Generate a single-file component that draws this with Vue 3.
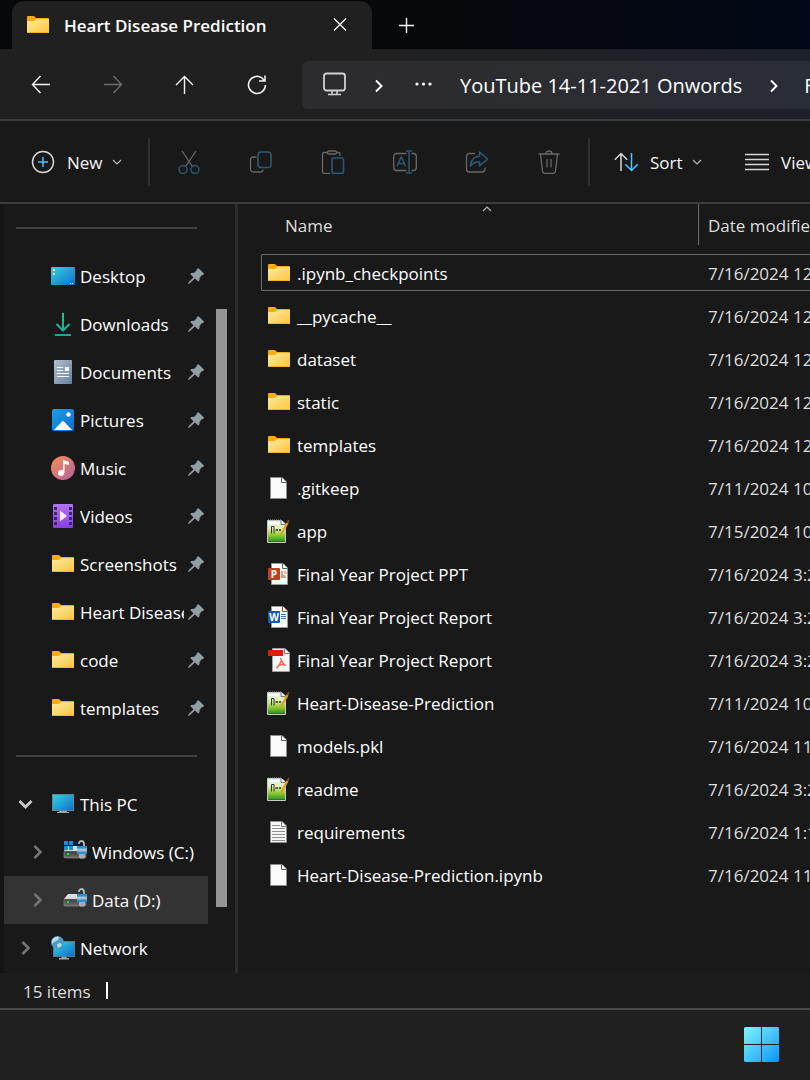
<script setup>
import { ref } from 'vue'

const quickAccess = [
  { name: 'Desktop', icon: 'desktop' },
  { name: 'Downloads', icon: 'downloads' },
  { name: 'Documents', icon: 'documents' },
  { name: 'Pictures', icon: 'pictures' },
  { name: 'Music', icon: 'music' },
  { name: 'Videos', icon: 'videos' },
  { name: 'Screenshots', icon: 'folder' },
  { name: 'Heart Disease Prediction', icon: 'folder' },
  { name: 'code', icon: 'folder' },
  { name: 'templates', icon: 'folder' },
]

const devices = [
  { name: 'This PC', icon: 'pc', open: true },
  { name: 'Windows (C:)', icon: 'drive-c', child: true },
  { name: 'Data (D:)', icon: 'drive-d', child: true, current: true },
  { name: 'Network', icon: 'network' },
]

const actions = [
  { name: 'Cut', icon: 'cut' },
  { name: 'Copy', icon: 'copy' },
  { name: 'Paste', icon: 'paste' },
  { name: 'Rename', icon: 'rename' },
  { name: 'Share', icon: 'share' },
  { name: 'Delete', icon: 'trash' },
]

const files = [
  { name: '.ipynb_checkpoints', icon: 'folder', date: '7/16/2024 12:30 PM' },
  { name: '__pycache__', icon: 'folder', date: '7/16/2024 12:30 PM' },
  { name: 'dataset', icon: 'folder', date: '7/16/2024 12:30 PM' },
  { name: 'static', icon: 'folder', date: '7/16/2024 12:30 PM' },
  { name: 'templates', icon: 'folder', date: '7/16/2024 12:30 PM' },
  { name: '.gitkeep', icon: 'file', date: '7/11/2024 10:15 AM' },
  { name: 'app', icon: 'notepad', date: '7/15/2024 10:40 AM' },
  { name: 'Final Year Project PPT', icon: 'ppt', date: '7/16/2024 3:20 PM' },
  { name: 'Final Year Project Report', icon: 'word', date: '7/16/2024 3:20 PM' },
  { name: 'Final Year Project Report', icon: 'pdf', date: '7/16/2024 3:20 PM' },
  { name: 'Heart-Disease-Prediction', icon: 'notepad', date: '7/11/2024 10:15 AM' },
  { name: 'models.pkl', icon: 'file', date: '7/16/2024 11:50 AM' },
  { name: 'readme', icon: 'notepad', date: '7/16/2024 3:20 PM' },
  { name: 'requirements', icon: 'textfile', date: '7/16/2024 1:10 PM' },
  { name: 'Heart-Disease-Prediction.ipynb', icon: 'file', date: '7/16/2024 11:50 AM' },
]

const focused = ref(0)
</script>

<template>
  <!-- icon sprite -->
  <svg class="sprite" aria-hidden="true">
    <defs>
      <linearGradient id="g-folder" x1="0" y1="0" x2="1" y2="1">
        <stop offset="0" stop-color="#ffe9a0" /><stop offset="1" stop-color="#fcc73c" />
      </linearGradient>
      <linearGradient id="g-screen" x1="0" y1="0" x2="1" y2="1">
        <stop offset="0" stop-color="#35d3e2" /><stop offset="1" stop-color="#0f6fca" />
      </linearGradient>
      <linearGradient id="g-down" x1="0" y1="0" x2="0" y2="24" gradientUnits="userSpaceOnUse">
        <stop offset="0" stop-color="#2fc583" /><stop offset="1" stop-color="#14a89f" />
      </linearGradient>
      <linearGradient id="g-doc" x1="0" y1="0" x2="1" y2="1">
        <stop offset="0" stop-color="#b0bfd2" /><stop offset="1" stop-color="#67829f" />
      </linearGradient>
      <linearGradient id="g-pic" x1="0" y1="0" x2="1" y2="1">
        <stop offset="0" stop-color="#1d9de6" /><stop offset="1" stop-color="#0c6fd0" />
      </linearGradient>
      <linearGradient id="g-music" x1="0" y1="0" x2="1" y2="1">
        <stop offset="0.1" stop-color="#f08b5c" /><stop offset="1" stop-color="#b160a0" />
      </linearGradient>
      <linearGradient id="g-video" x1="0" y1="0" x2="0" y2="1">
        <stop offset="0" stop-color="#b473f0" /><stop offset="1" stop-color="#8840dd" />
      </linearGradient>
      <linearGradient id="g-note" x1="0" y1="0" x2="0" y2="1">
        <stop offset="0" stop-color="#e4f3f7" /><stop offset="0.35" stop-color="#e2f0b4" />
        <stop offset="0.65" stop-color="#97cc35" /><stop offset="1" stop-color="#218b22" />
      </linearGradient>
      <linearGradient id="g-drive" x1="0" y1="0" x2="0" y2="1">
        <stop offset="0" stop-color="#3a3a3a" /><stop offset="1" stop-color="#6e6e6e" />
      </linearGradient>
      <linearGradient id="g-win" x1="0" y1="0" x2="35" y2="35" gradientUnits="userSpaceOnUse">
        <stop offset="0.1" stop-color="#74ecff" /><stop offset="1" stop-color="#0b95fb" />
      </linearGradient>
    </defs>

    <symbol id="i-folder" viewBox="0 0 24 24">
      <path d="M1 4Q1 3 2 3H8L10 5H22Q23 5 23 6V19H1Z" fill="#f9ac0e" />
      <path d="M1 8H8L10 6H23V19Q23 20 22 20H2Q1 20 1 19Z" fill="url(#g-folder)" />
      <path d="M1 19.500H23" stroke="#f0b429" />
    </symbol>
    <symbol id="i-desktop" viewBox="0 0 24 24">
      <rect y="3" width="24" height="18" rx="1" fill="url(#g-screen)" />
      <path d="M2 5h2v2H2zM2 9h2v2H2zM19 19h1v1h-1zM21 19h1v1h-1z" fill="#fff" />
    </symbol>
    <symbol id="i-downloads" viewBox="0 0 24 24">
      <path d="M12 1V18M5.500 12L12 18.500L18.500 12M4 23H20" fill="none" stroke="url(#g-down)" stroke-width="2" />
    </symbol>
    <symbol id="i-documents" viewBox="0 0 24 24">
      <rect x="3" width="18" height="24" rx="1" fill="url(#g-doc)" />
      <path d="M6 7.500h6M6 10.500h6M6 13.500h12M6 16.500h12" stroke="#fff" />
      <rect x="14" y="7" width="4" height="4" fill="#fff" />
    </symbol>
    <symbol id="i-pictures" viewBox="0 0 24 24">
      <rect x="1" y="1" width="22" height="22" rx="2" fill="url(#g-pic)" />
      <path d="M3 22L11 13.500Q12 12.500 13 13.500L21 22Z" fill="#f7fbff" />
      <circle cx="17.500" cy="6.500" r="2.200" fill="#fff" />
    </symbol>
    <symbol id="i-music" viewBox="0 0 24 24">
      <circle cx="12" cy="12" r="12" fill="url(#g-music)" />
      <circle cx="10" cy="17" r="3" fill="#fff" />
      <path d="M12 17V4L18 6V9L13.500 8V17Z" fill="#fff" />
    </symbol>
    <symbol id="i-videos" viewBox="0 0 24 24">
      <rect x="2" width="20" height="24" rx="1" fill="url(#g-video)" />
      <path d="M3 3h3v3H3zM3 8h3v3H3zM3 13h3v3H3zM3 18h3v3H3zM18 3h3v3h-3zM18 8h3v3h-3zM18 13h3v3h-3zM18 18h3v3h-3z" fill="#3c2370" />
      <path d="M9 6.500L16 12L9 17.500Z" fill="#f3ecff" />
    </symbol>
    <symbol id="i-pc" viewBox="0 0 24 24">
      <path d="M9 18h6l1 2h2v1H6v-1h2z" fill="#9aa7ad" />
      <rect x="1" y="2" width="22" height="17" fill="#5d8792" />
      <rect x="2" y="3" width="20" height="15" fill="url(#g-screen)" />
    </symbol>
    <symbol id="i-lock" viewBox="0 0 24 24">
      <path d="M16 4V3Q16.500 1 18.500 1T21 3.500V7" fill="none" stroke="#aeb8bf" stroke-width="1.800" />
      <rect x="14" y="6" width="10" height="8" fill="#2590dc" />
      <path d="M14 8.500H24V11.500H14Z" fill="#a9bfd0" />
      <path d="M16 14H22V17L21 18.500H17L16 17Z" fill="#a7adb3" />
    </symbol>
    <symbol id="i-drive-c" viewBox="0 0 24 24">
      <path d="M4 6H20L23 11H1Z" fill="#dcdcdc" />
      <rect x="1" y="11" width="22" height="7" rx="1" fill="url(#g-drive)" stroke="#a8a8a8" stroke-width="0.500" />
      <rect x="4" y="13" width="2" height="2" fill="#2fe02f" />
      <path d="M1 1h4v4H1zM6 1h4v4H6zM1 6h4v4H1zM6 6h4v4H6z" fill="#128ede" />
      <use href="#i-lock" />
    </symbol>
    <symbol id="i-drive-d" viewBox="0 0 24 24">
      <path d="M5 6H19L23 11H1Z" fill="#dcdcdc" />
      <rect x="1" y="11" width="22" height="7" rx="1" fill="url(#g-drive)" stroke="#a8a8a8" stroke-width="0.500" />
      <rect x="4" y="13" width="2" height="2" fill="#2fe02f" />
      <use href="#i-lock" />
    </symbol>
    <symbol id="i-network" viewBox="0 0 24 24">
      <path d="M11 21h4l1 1h2v1.500H8V22h2z" fill="#9aa7ad" />
      <rect x="2" y="5" width="22" height="16" fill="#557f8c" />
      <rect x="3" y="6" width="20" height="14" fill="url(#g-screen)" />
      <circle cx="6.500" cy="6.500" r="6.500" fill="#4c9cc6" />
      <path d="M2 2.500Q5 0 8 1L7 4L3 6L1 8Q0 5 2 2.500ZM6 8L9 7L11 9Q9 12 7 12Z" fill="#b8dced" />
    </symbol>

    <symbol id="i-file" viewBox="0 0 24 24">
      <path d="M3.500 1.500H15L19.500 6V22.500H3.500Z" fill="#fafafa" stroke="#8d8d8d" />
      <path d="M14.500 1.500V6.500H19.500" fill="#fff" stroke="#5c5c5c" />
    </symbol>
    <symbol id="i-textfile" viewBox="0 0 24 24">
      <path d="M3.500 1.500H15L19.500 6V22.500H3.500Z" fill="#f6f6f6" stroke="#8d8d8d" />
      <path d="M14.500 1.500V6.500H19.500" fill="#fff" stroke="#777" />
      <path d="M5 5.500h8M5 8.500h13M5 11.500h13M5 14.500h13M5 17.500h13M5 20.500h13" stroke="#8f8f8f" />
    </symbol>
    <symbol id="i-notepad" viewBox="0 0 24 24">
      <path d="M0.500 1.500H14.500L18.500 5V23.500H0.500Z" fill="url(#g-note)" stroke="#c8c8c8" />
      <path d="M14 1V5.500H18.500" fill="#fff" stroke="#777" />
      <path d="M1 1H14" stroke="#9aa" stroke-dasharray="1 1" />
      <path d="M1 4H12" stroke="#fff" stroke-width="2" />
      <path d="M4.500 7.500V14.500M4.500 7.500H7V14.500" fill="none" stroke="#333" />
      <path d="M8.500 11H11M12 11H14" stroke="#333" stroke-width="1.600" />
      <path d="M13 17.500L14 13.500L19.500 3.500L21.500 4.500L15.500 15Z" fill="#e3a01d" />
      <path d="M19.500 3.500L21 .500L22.500 1.500L21.500 4.500Z" fill="#8a3a35" />
      <path d="M2 22.500H18" stroke="#15801c" />
    </symbol>
    <symbol id="i-ppt" viewBox="0 0 24 24">
      <path d="M4.500 1.500H16L20.500 6V22.500H4.500Z" fill="#fdfdfd" stroke="#999" />
      <path d="M15.500 1.500V6.500H20.500" fill="#fff" stroke="#5c5c5c" />
      <path d="M14 9V16H19Q19 14 18 13H16V9Z" fill="#ec9480" />
      <path d="M17 8V12H20Q19.500 8.500 17 8Z" fill="#f4b9ab" />
      <rect x="1" y="6" width="12" height="12" rx="1" fill="#c43e1c" />
      <text x="7" y="16" text-anchor="middle" class="badge-letter">P</text>
    </symbol>
    <symbol id="i-word" viewBox="0 0 24 24">
      <path d="M4.500 1.500H16L20.500 6V22.500H4.500Z" fill="#fdfdfd" stroke="#999" />
      <path d="M15.500 1.500V6.500H20.500" fill="#fff" stroke="#5c5c5c" />
      <path d="M14 9.500h5M14 11.500h5M14 13.500h5" stroke="#3b78c8" />
      <rect x="1" y="6" width="12" height="12" rx="1" fill="#185abd" />
      <text x="7" y="16" text-anchor="middle" class="badge-letter">W</text>
    </symbol>
    <symbol id="i-pdf" viewBox="0 0 24 24">
      <path d="M5.500 .500H18L22.500 5V23.500H5.500Z" fill="#f5f5f5" stroke="#a0a0a0" />
      <path d="M17.500 .500V5.500H22.500" fill="#fff" stroke="#777" />
      <rect x="1" y="2" width="15" height="6" fill="#e31b0c" />
      <path d="M13.500 10Q14.500 14 17.500 17M14 13Q13 17 9.500 20.500M11 17.500Q15 15.500 19 17.500" fill="none" stroke="#f0604f" stroke-width="1.300" />
    </symbol>

    <symbol id="i-pin" viewBox="0 0 16 16">
      <path d="M9 .800Q10 0 11 .700L15.500 5Q16.300 6.200 15 7L13.500 7.600L11.600 10L11.400 12.600L10.300 13.600L6.900 10.500L1.300 15.800H.200V14.800L5.500 9.300L2.300 6.200L3.300 5L6.300 4.700L8.500 2.600Z" fill="#929da4" />
    </symbol>
    <symbol id="i-chev-right" viewBox="0 0 24 24">
      <path d="M8.500 6L14.500 12L8.500 18" fill="none" stroke="#747474" stroke-width="2.600" />
    </symbol>
    <symbol id="i-chev-down" viewBox="0 0 24 24">
      <path d="M5.500 9L11.500 15L17.500 9" fill="none" stroke="#c8c8c8" stroke-width="2.800" />
    </symbol>
    <symbol id="i-crumb" viewBox="0 0 24 24">
      <path d="M9 7.500L14.500 13L9 18.500" fill="none" stroke="#fff" stroke-width="1.900" />
    </symbol>
    <symbol id="i-drop" viewBox="0 0 10 10">
      <path d="M1 3L5 7L9 3" fill="none" stroke="#b5b5b5" stroke-width="1.200" />
    </symbol>

    <symbol id="i-close" viewBox="0 0 24 24">
      <path d="M6 5.500L18 17.500M18 5.500L6 17.500" stroke="#f5f5f5" stroke-width="1.300" />
    </symbol>
    <symbol id="i-plus" viewBox="0 0 24 24">
      <path d="M5 12.500H20M12.500 5V20" stroke="#f5f5f5" stroke-width="1.400" />
    </symbol>
    <symbol id="i-back" viewBox="0 0 24 24">
      <path d="M21 12.500H3.500M11.500 4L3.500 12.500L11.500 21" fill="none" stroke="currentColor" stroke-width="1.400" />
    </symbol>
    <symbol id="i-forward" viewBox="0 0 24 24">
      <path d="M3 12.500H20.500M12.500 4L20.500 12.500L12.500 21" fill="none" stroke="currentColor" stroke-width="1.400" />
    </symbol>
    <symbol id="i-up" viewBox="0 0 24 24">
      <path d="M11.500 22V4.500M3 13L11.500 4.500L20 13" fill="none" stroke="currentColor" stroke-width="1.400" />
    </symbol>
    <symbol id="i-refresh" viewBox="0 0 24 24">
      <path d="M20.500 13A8.500 8.500 0 1 1 17 6L20 9M20 3.500V9H14" fill="none" stroke="currentColor" stroke-width="1.500" />
    </symbol>
    <symbol id="i-monitor" viewBox="0 0 24 24">
      <rect x="1" y="1.500" width="21" height="17" rx="2.500" fill="none" stroke="#d0d0d0" stroke-width="1.800" />
      <path d="M9 18.500V22M14 18.500V22M5 22.500H18" stroke="#d0d0d0" stroke-width="1.600" />
    </symbol>
    <symbol id="i-more" viewBox="0 0 24 24">
      <circle cx="6" cy="12" r="1.600" fill="#fff" />
      <circle cx="12.500" cy="12" r="1.600" fill="#fff" />
      <circle cx="19" cy="12" r="1.600" fill="#fff" />
    </symbol>

    <symbol id="i-new" viewBox="0 0 24 24">
      <circle cx="12" cy="12" r="10.500" fill="none" stroke="#d6d6d6" stroke-width="1.500" />
      <path d="M7 12H17M12 7V17" stroke="#4cc2ff" stroke-width="1.500" />
    </symbol>
    <symbol id="i-cut" viewBox="0 0 24 24">
      <path d="M5 1L15.500 16.500M19 1L8.500 16.500" stroke="#686868" stroke-width="1.300" />
      <circle cx="6" cy="19.500" r="4" fill="none" stroke="#285a76" stroke-width="1.500" />
      <circle cx="18" cy="19.500" r="4" fill="none" stroke="#285a76" stroke-width="1.500" />
    </symbol>
    <symbol id="i-copy" viewBox="0 0 24 24">
      <path d="M7.500 7H4.500Q1.500 7 1.500 10V18.500Q1.500 22 5 22H11Q14 22 14 19.500" fill="none" stroke="#686868" stroke-width="1.300" />
      <rect x="9" y="2" width="13" height="15.500" rx="3" fill="none" stroke="#285a76" stroke-width="1.600" />
    </symbol>
    <symbol id="i-paste" viewBox="0 0 24 24">
      <path d="M7 2.500H3Q1.500 2.500 1.500 4V22Q1.500 23.300 3 23.300H9M15 2.500H18Q19 2.500 19 4V6" fill="none" stroke="#686868" stroke-width="1.300" />
      <rect x="6.500" y="1" width="9" height="3" rx="1.500" fill="none" stroke="#686868" stroke-width="1.300" />
      <rect x="11" y="8" width="11.500" height="15.200" rx="1.500" fill="none" stroke="#285a76" stroke-width="1.600" />
    </symbol>
    <symbol id="i-rename" viewBox="0 0 24 24">
      <path d="M13.500 3.500H3.500Q.700 3.500 .700 6.500V17.500Q.700 20.500 3.500 20.500H13.500M18.500 3.500H20.500Q23.300 3.500 23.300 6.500V17.500Q23.300 20.500 20.500 20.500H18.500" fill="none" stroke="#686868" stroke-width="1.300" />
      <path d="M4 16.500L8 7H8.500L12.500 16.500M5.300 13.500H11.200M16 1V23M13 1H19M13 23H19" fill="none" stroke="#285a76" stroke-width="1.500" />
    </symbol>
    <symbol id="i-share" viewBox="0 0 24 24">
      <path d="M10 3.500H4.500Q1.500 3.500 1.500 6.500V19Q1.500 22 4.500 22H17Q20 22 20 19V17.500" fill="none" stroke="#686868" stroke-width="1.300" />
      <path d="M14.500 2L22.500 9L14.500 16V12Q9 11.500 5.500 16Q6 7 14.500 6Z" fill="none" stroke="#285a76" stroke-width="1.600" stroke-linejoin="round" />
    </symbol>
    <symbol id="i-trash" viewBox="0 0 24 24">
      <path d="M1.500 4H22.500M9 4Q9 1 12 1T15 4M3.500 4L5.500 21Q5.800 23.300 8 23.300H16Q18.200 23.300 18.500 21L20.500 4M10 9V17.500M14 9V17.500" fill="none" stroke="#686868" stroke-width="1.300" />
    </symbol>
    <symbol id="i-sort" viewBox="0 0 24 24">
      <path d="M7 21V3.500M.800 9.700L7 3.500L13.200 9.700" fill="none" stroke="#d6d6d6" stroke-width="1.500" />
      <path d="M17.500 3V20.500M11.300 14.300L17.500 20.500L23.700 14.300" fill="none" stroke="#4cc2ff" stroke-width="1.500" />
    </symbol>
    <symbol id="i-view" viewBox="0 0 24 24">
      <path d="M0 4.500H24M0 9.500H24M0 14.500H24M0 19.500H24" stroke="#d6d6d6" stroke-width="1.500" />
    </symbol>
    <symbol id="i-start" viewBox="0 0 35 35">
      <path d="M1 0H17V17H0V1ZM18 0H34L35 1V17H18ZM0 18H17V35H1L0 34ZM18 18H35V34L34 35H18Z" fill="url(#g-win)" />
    </symbol>
  </svg>

  <div class="desktop">
    <header class="tabs">
      <div class="tab">
        <svg class="icon"><use href="#i-folder" /></svg>
        <h1>Heart Disease Prediction</h1>
        <button aria-label="Close tab"><svg class="icon"><use href="#i-close" /></svg></button>
      </div>
      <button class="new-tab" aria-label="New tab"><svg class="icon"><use href="#i-plus" /></svg></button>
    </header>

    <nav class="nav">
      <button aria-label="Back"><svg class="icon"><use href="#i-back" /></svg></button>
      <button aria-label="Forward" disabled><svg class="icon"><use href="#i-forward" /></svg></button>
      <button aria-label="Up"><svg class="icon"><use href="#i-up" /></svg></button>
      <button aria-label="Refresh"><svg class="icon"><use href="#i-refresh" /></svg></button>
      <div class="address">
        <button aria-label="This PC"><svg class="icon"><use href="#i-monitor" /></svg></button>
        <svg class="icon sep"><use href="#i-crumb" /></svg>
        <button class="more" aria-label="More"><svg class="icon"><use href="#i-more" /></svg></button>
        <a href="#">YouTube 14-11-2021 Onwords</a>
        <svg class="icon sep last"><use href="#i-crumb" /></svg>
        <a href="#">Final</a>
      </div>
    </nav>

    <div class="toolbar">
      <button class="tool new">
        <svg class="icon"><use href="#i-new" /></svg>
        <span>New</span>
        <svg class="drop"><use href="#i-drop" /></svg>
      </button>
      <div class="actions">
        <button v-for="action in actions" :key="action.name" :aria-label="action.name" disabled>
          <svg class="icon"><use :href="'#i-' + action.icon" /></svg>
        </button>
      </div>
      <button class="tool sort">
        <svg class="icon"><use href="#i-sort" /></svg>
        <span>Sort</span>
        <svg class="drop"><use href="#i-drop" /></svg>
      </button>
      <button class="tool view">
        <svg class="icon"><use href="#i-view" /></svg>
        <span>View</span>
      </button>
    </div>

    <main class="main">
      <aside class="sidebar">
        <div class="places">
          <div class="rule"></div>
          <a v-for="place in quickAccess" :key="place.name" href="#" class="place pinned">
            <svg class="icon"><use :href="'#i-' + place.icon" /></svg>
            <span>{{ place.name }}</span>
            <svg class="pin"><use href="#i-pin" /></svg>
          </a>
          <div class="rule"></div>
          <div v-for="device in devices" :key="device.name" class="place"
            :class="{ child: device.child, current: device.current }">
            <button :aria-label="'Expand ' + device.name">
              <svg class="icon"><use :href="device.open ? '#i-chev-down' : '#i-chev-right'" /></svg>
            </button>
            <a href="#">
              <svg class="icon"><use :href="'#i-' + device.icon" /></svg>
              <span>{{ device.name }}</span>
            </a>
          </div>
        </div>
        <div class="scrollbar"><div class="thumb"></div></div>
      </aside>

      <section class="content">
        <table>
          <colgroup><col class="col-name"><col class="col-date"></colgroup>
          <thead>
            <tr>
              <th>Name<svg class="caret"><use href="#i-drop" /></svg></th>
              <th>Date modified</th>
            </tr>
          </thead>
          <tbody>
            <tr v-for="(file, i) in files" :key="i" :class="{ focused: focused === i }" @click="focused = i">
              <td>
                <div class="file">
                  <svg class="icon"><use :href="'#i-' + file.icon" /></svg>
                  <span>{{ file.name }}</span>
                </div>
              </td>
              <td class="date">{{ file.date }}</td>
            </tr>
          </tbody>
        </table>
      </section>
    </main>

    <footer class="status">
      <span>{{ files.length }} items</span>
      <i></i>
    </footer>

    <div class="taskbar">
      <button aria-label="Start"><svg><use href="#i-start" /></svg></button>
    </div>
  </div>
</template>

<style>
body {
  background: #191919;
}
</style>

<style scoped>
.sprite {
  position: absolute;
  width: 0;
  height: 0;
}
.badge-letter {
  font: bold 10px "Open Sans", sans-serif;
  fill: #fff;
}
.desktop {
  display: flex;
  flex-direction: column;
  height: 100vh;
  overflow: hidden;
  font-family: "Open Sans", "Noto Sans", sans-serif;
  font-size: 17px;
  line-height: 24px;
  color: #fff;
  background: #191919;
}
button {
  display: flex;
  align-items: center;
  justify-content: center;
  flex: none;
  padding: 0;
  border: none;
  background: none;
  color: #f5f5f5;
  font: inherit;
}
a {
  color: inherit;
  text-decoration: none;
  white-space: nowrap;
}
.icon {
  display: block;
  flex: none;
  width: 24px;
  height: 24px;
}
.drop {
  width: 10px;
  height: 10px;
}
h1,
.tool span,
.place span,
.file span,
.status span,
.address a {
  padding-top: 2px;
}

/* tabs */
.tabs {
  display: flex;
  flex: none;
  height: 49px;
  padding-left: 12px;
  background: linear-gradient(90deg, #07080a 45%, #020817);
}
.tab {
  display: flex;
  align-items: center;
  box-sizing: border-box;
  width: 360px;
  margin-top: 1px;
  padding: 0 20px 0 14px;
  border-radius: 12px 12px 0 0;
  background: #202020;
}
.tab h1 {
  flex: 1;
  margin: 0 0 0 14px;
  font-size: 17px;
  font-weight: 600;
  white-space: nowrap;
}
.new-tab {
  margin-left: 22px;
}

/* navigation */
.nav {
  display: flex;
  align-items: center;
  flex: none;
  height: 70px;
  padding-left: 5px;
  border-bottom: 2px solid #3d3d3d;
  background: linear-gradient(90deg, #202020 45%, #1b202b);
}
.nav > button {
  width: 72px;
  height: 48px;
}
.nav button:disabled {
  color: #6c6c6c;
}
.address {
  display: flex;
  align-items: center;
  flex: 1;
  min-width: 0;
  height: 48px;
  margin: 2px 0 0 9px;
  padding-left: 21px;
  border-radius: 6px 0 0 6px;
  overflow: hidden;
  background: linear-gradient(90deg, #2c2c2e 25%, #292d37);
  font-size: 20px;
}
.address button {
  margin-bottom: 2px;
}
.sep {
  margin: 0 20px;
}
.last {
  margin-right: 18px;
}
.more {
  margin-right: 25px;
}

/* toolbar */
.toolbar {
  display: flex;
  align-items: center;
  flex: none;
  height: 81px;
  border-bottom: 2px solid #3d3d3d;
  overflow: hidden;
}
.tool {
  justify-content: flex-start;
  gap: 12px;
}
.new {
  box-sizing: border-box;
  width: 148px;
  padding-left: 31px;
}
.new .drop,
.sort .drop {
  margin-left: -3px;
}
.actions {
  display: flex;
  padding: 0 3px;
  border: solid #303030;
  border-width: 0 2px;
}
.actions button {
  width: 72px;
  height: 48px;
}
.sort {
  box-sizing: border-box;
  width: 155px;
  padding-left: 24px;
}

/* sidebar */
.main {
  display: flex;
  flex: 1;
  min-height: 0;
}
.sidebar {
  display: flex;
  flex: none;
  border-left: 4px solid #151515;
  border-right: 3px solid #2b2b2b;
}
.places {
  width: 204px;
  overflow: hidden;
}
.rule {
  height: 2px;
  margin: 23px 11px 23px 12px;
  background: #3f3f3f;
}
.place,
.place a {
  display: flex;
  align-items: center;
}
.place {
  box-sizing: border-box;
  height: 48px;
  padding-left: 10px;
}
.pinned {
  padding: 0 4px 0 47px;
}
.place a {
  margin-left: 13px;
}
.place span {
  flex: 1;
  margin-left: 5px;
  overflow: hidden;
  white-space: nowrap;
}
.child {
  padding-left: 22px;
}
.current {
  background: #333;
}
.pin {
  flex: none;
  width: 16px;
  height: 16px;
  margin-left: 4px;
}
.scrollbar {
  display: grid;
  grid-template-rows: 105fr 598fr 66fr;
  width: 11px;
  margin: 0 8px;
}
.thumb {
  grid-row: 2;
  background: #959595;
}

/* file list */
.content {
  flex: 1;
  min-width: 0;
  padding-left: 23px;
  overflow: hidden;
}
table {
  width: 640px;
  table-layout: fixed;
  border-collapse: separate;
  border-spacing: 0 6px;
  margin-top: -6px;
}
.col-name {
  width: 438px;
}
th {
  position: relative;
  height: 44px;
  padding: 0 0 0 9px;
  font-weight: 400;
  text-align: left;
  color: #dedede;
}
th:first-child {
  padding-left: 24px;
  background: linear-gradient(#6b6b6b, #6b6b6b) right top / 1px 41px no-repeat;
}
.caret {
  position: absolute;
  top: 0;
  left: 220px;
  width: 12px;
  height: 10px;
  transform: rotate(180deg);
}
td {
  box-sizing: border-box;
  height: 37px;
  padding: 2px 0 0 9px;
  border: solid transparent;
  border-width: 1px 0;
  white-space: nowrap;
}
td:first-child {
  padding: 0 0 0 5px;
  border-left-width: 1px;
}
.focused td {
  border-color: #6b6b6b;
}
.focused td:first-child {
  border-radius: 2px 0 0 2px;
}
.file {
  display: flex;
  align-items: center;
  gap: 6px;
}
.date {
  color: #dedede;
}

/* status and taskbar */
.status {
  display: flex;
  align-items: center;
  flex: none;
  gap: 15px;
  height: 35px;
  padding-left: 23px;
  border-bottom: 2px solid #484848;
  background: #1c1c1c;
  color: #dedede;
}
.status i {
  width: 2px;
  height: 17px;
  background: #fff;
}
.taskbar {
  display: flex;
  align-items: center;
  justify-content: flex-end;
  flex: none;
  box-sizing: border-box;
  height: 70px;
  padding: 0 31px 2px 0;
  background: #202020;
}
.taskbar svg {
  width: 35px;
  height: 35px;
}
</style>
